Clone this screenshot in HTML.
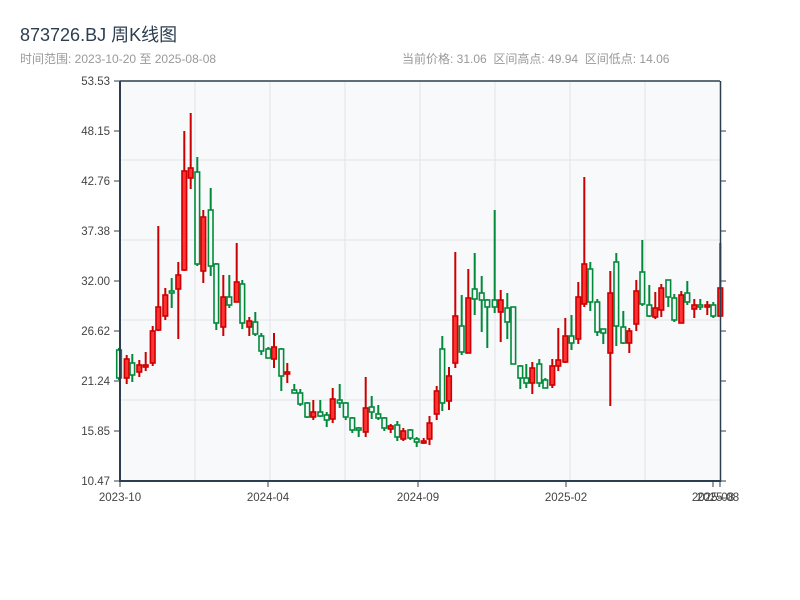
<!DOCTYPE html>
<html><head><meta charset="utf-8"><style>
body{margin:0;background:#fff;width:800px;height:600px;overflow:hidden;font-family:"Liberation Sans","Noto Sans CJK SC",sans-serif}
</style></head><body>
<svg id="s" width="800" height="600" xmlns="http://www.w3.org/2000/svg" style="position:absolute;left:0;top:0">
<text x="20" y="41" font-size="18" fill="#2c3e50" font-family="Liberation Sans,Noto Sans CJK SC,sans-serif">873726.BJ 周K线图</text>
<text x="20" y="63" font-size="12" fill="#999" font-family="Liberation Sans,Noto Sans CJK SC,sans-serif">时间范围: 2023-10-20 至 2025-08-08</text>
<text x="402" y="63" font-size="12" fill="#999" font-family="Liberation Sans,Noto Sans CJK SC,sans-serif" xml:space="preserve">当前价格: 31.06  区间高点: 49.94  区间低点: 14.06</text>
<rect x="120" y="81" width="600" height="400" fill="#f7f9fb"/>
<g stroke="#e1e4ea" stroke-width="1">
<line x1="120" y1="160" x2="720" y2="160"/><line x1="120" y1="240" x2="720" y2="240"/><line x1="120" y1="320" x2="720" y2="320"/><line x1="120" y1="400" x2="720" y2="400"/>
<line x1="195" y1="81" x2="195" y2="481"/><line x1="270" y1="81" x2="270" y2="481"/><line x1="345" y1="81" x2="345" y2="481"/><line x1="420" y1="81" x2="420" y2="481"/><line x1="495" y1="81" x2="495" y2="481"/><line x1="570" y1="81" x2="570" y2="481"/><line x1="645" y1="81" x2="645" y2="481"/>
</g>
<g id="c"></g>
<g stroke="#2c3e50" stroke-width="2" fill="none">
<line x1="120" y1="81" x2="120" y2="482"/><line x1="119" y1="481" x2="721" y2="481"/><line x1="120" y1="81" x2="720" y2="81" stroke-width="1.5"/><line x1="720.5" y1="81" x2="720.5" y2="482" stroke-width="1.5"/>
</g>
<g stroke="#2c3e50" stroke-width="1">
<line x1="114" y1="81" x2="120" y2="81"/><line x1="114" y1="131" x2="120" y2="131"/><line x1="114" y1="181" x2="120" y2="181"/><line x1="114" y1="231" x2="120" y2="231"/><line x1="114" y1="281" x2="120" y2="281"/><line x1="114" y1="331" x2="120" y2="331"/><line x1="114" y1="381" x2="120" y2="381"/><line x1="114" y1="431" x2="120" y2="431"/><line x1="114" y1="481" x2="120" y2="481"/>
<line x1="720" y1="131" x2="726" y2="131"/><line x1="720" y1="181" x2="726" y2="181"/><line x1="720" y1="231" x2="726" y2="231"/><line x1="720" y1="281" x2="726" y2="281"/><line x1="720" y1="331" x2="726" y2="331"/><line x1="720" y1="381" x2="726" y2="381"/><line x1="720" y1="431" x2="726" y2="431"/><line x1="720" y1="481" x2="726" y2="481"/>
<line x1="120" y1="481" x2="120" y2="487"/><line x1="268" y1="481" x2="268" y2="487"/><line x1="418" y1="481" x2="418" y2="487"/><line x1="566" y1="481" x2="566" y2="487"/><line x1="713" y1="481" x2="713" y2="487"/><line x1="720" y1="481" x2="720" y2="487"/>
</g>
<g font-size="11.5" fill="#444" text-anchor="end" font-family="Liberation Sans,sans-serif">
<text x="110" y="85">53.53</text><text x="110" y="135">48.15</text><text x="110" y="185">42.76</text><text x="110" y="235">37.38</text><text x="110" y="285">32.00</text><text x="110" y="335">26.62</text><text x="110" y="385">21.24</text><text x="110" y="435">15.85</text><text x="110" y="485">10.47</text>
</g>
<g font-size="11.5" fill="#444" text-anchor="middle" font-family="Liberation Sans,sans-serif">
<text x="120" y="501">2023-10</text><text x="268" y="501">2024-04</text><text x="418" y="501">2024-09</text><text x="566" y="501">2025-02</text><text x="713" y="501">2025-08</text><text x="718" y="501">2025-08</text>
</g>
</svg>
<script>
var d=[[119,348,380,350,378,0],[126.7,355,384,359,378,1],[132.3,354,382,363,375,0],[139.3,360,377,365,372,1],[145.7,352,371,365,367,1],[152.7,326,366,331,363,1],[158.3,226,331,307,330,1],[165.3,288,320,295,316,1],[171.7,278,308,291,293,0],[178.3,262,339,275,289,1],[184.3,131,271,171,270,1],[190.7,113,189,168,178,1],[197.3,157,266,172,264,0],[203.3,210,283,217,271,1],[210.7,188,276,210,266,0],[216.3,263,330,264,323,0],[223.3,275,336,297,327,1],[229.3,275,308,297,305,0],[236.7,243,302,282,302,1],[242.3,280,329,284,323,0],[249.3,317,336,321,327,1],[255.3,312,336,322,334,0],[261.3,333,355,336,351,0],[268.3,347,358,349,358,0],[274,333,368,347,359,1],[281.3,348,391,349,376,0],[287.3,363,383,372,373,1],[294.3,384,393,390,393,0],[300.3,389,406,393,404,0],[307.3,402,418,403,417,0],[313.3,400,420,412,417,1],[320.3,400,417,412,416,0],[326.7,412,427,415,420,0],[332.7,388,423,399,419,1],[339.7,384,408,400,403,0],[345.7,402,420,403,417,0],[352.3,417,433,418,430,0],[358.7,427,437,428,430,0],[365.7,377,437,408,432,1],[371.7,396,419,407,412,0],[378.3,405,420,414,418,0],[384.3,417,431,418,428,0],[390.7,424,433,426,429,1],[397.3,421,441,425,437,0],[403.3,428,441,431,439,1],[410.3,429,440,430,438,0],[416.7,437,447,439,442,0],[423.7,438,444,441,442,1],[429.5,416,445,423,439,1],[436.7,386,420,391,414,1],[442.3,336,411,349,403,0],[449,367,410,376,401,1],[455.3,252,368,316,363,1],[461.7,295,355,326,352,0],[468.3,269,353,298,353,1],[474.7,253,315,289,299,0],[481.7,276,332,293,300,0],[487.3,299,348,300,307,0],[494.7,210,313,300,307,0],[500.7,290,342,300,312,1],[507.3,293,339,308,322,0],[513.3,307,364,307,364,0],[520.3,365,389,366,378,0],[526.3,364,388,378,383,0],[532.3,362,394,368,383,1],[539.3,359,387,364,383,0],[545.3,378,388,380,388,0],[552.3,359,388,366,385,1],[558.3,328,371,360,366,1],[565.3,318,363,336,362,1],[571.5,315,350,336,343,0],[578.3,282,344,297,339,1],[584.3,177,307,264,304,1],[590.3,262,311,269,302,0],[597.3,299,336,302,332,0],[603.3,329,344,329,333,0],[610.3,271,406,293,353,1],[616.3,253,346,262,326,0],[623.3,311,344,327,343,0],[629.3,328,353,331,343,1],[636.3,280,331,291,324,1],[642.3,240,306,272,304,0],[649.3,285,317,305,316,0],[655.3,292,319,308,317,1],[661.3,284,317,288,310,1],[668.3,280,307,280,297,0],[674.3,294,322,298,320,0],[681.3,291,323,295,323,1],[687.3,281,305,293,302,0],[694.3,299,318,305,309,1],[700.3,299,310,305,307,0],[707.3,301,315,305,307,1],[713.3,302,318,305,316,0],[720.3,243,316,288,316,1]];
var h='';
d.forEach(function(c){var st=c[5]?'#cc0000':'#008a3a',fl=c[5]?'#ff3333':'#f7f9fb';var hh=Math.max(c[4]-c[3],2);
h+='<line x1="'+c[0]+'" y1="'+c[1]+'" x2="'+c[0]+'" y2="'+c[2]+'" stroke="'+st+'" stroke-width="2"/>';
h+='<rect x="'+(c[0]-2.3)+'" y="'+c[3]+'" width="4.6" height="'+hh+'" fill="'+fl+'" stroke="'+st+'" stroke-width="1.6"/>';});
document.getElementById('c').innerHTML=h;
</script>
</body></html>
